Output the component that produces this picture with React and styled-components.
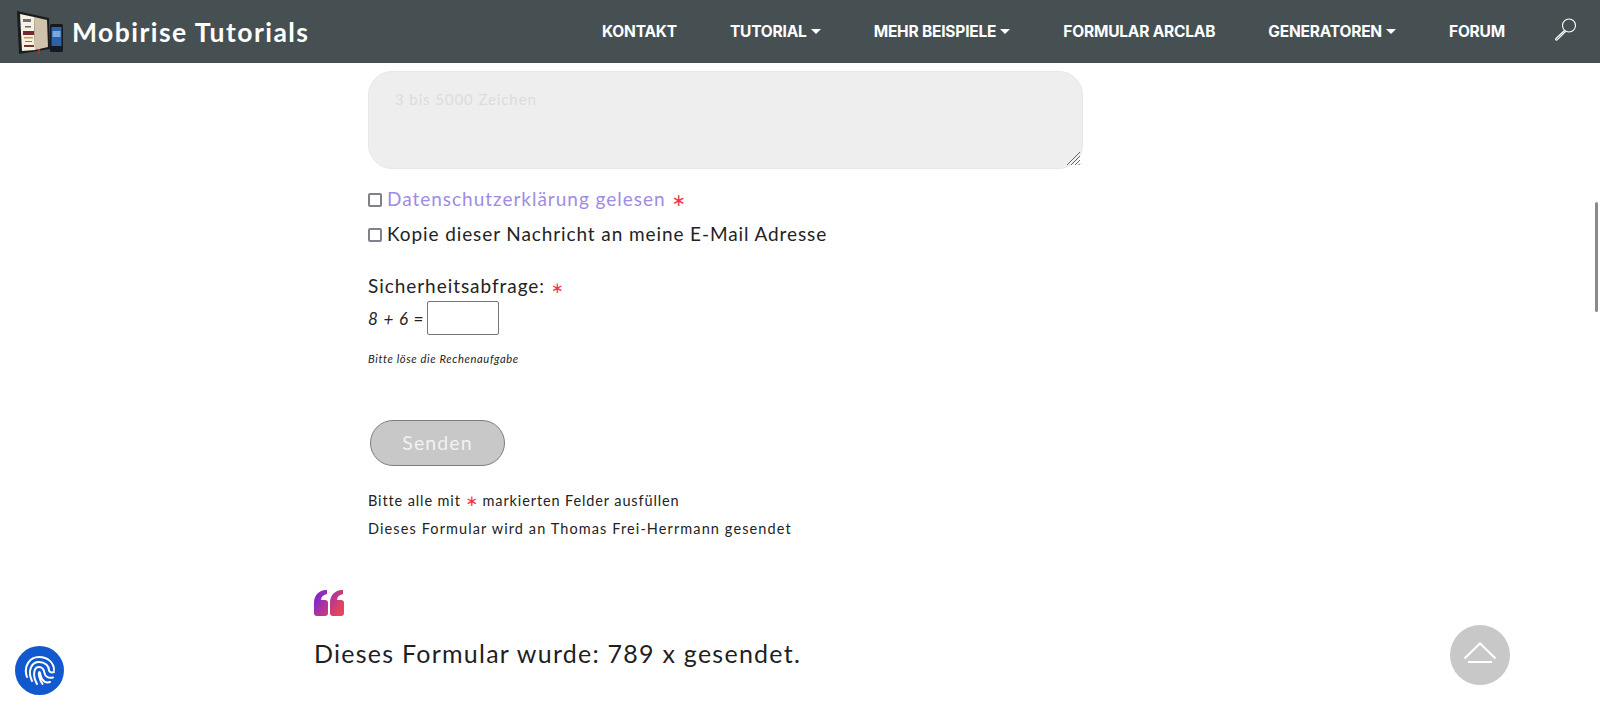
import React from "react";
import styled, { createGlobalStyle } from "styled-components";

const Global = createGlobalStyle`
  html, body { margin: 0; padding: 0; height: 708px; overflow: hidden; background: #fff; }
  * { box-sizing: border-box; }
  body { font-family: "Lato", "Noto Sans", sans-serif; color: #232323; }
`;

const Page = styled.div`
  width: 1600px;
  height: 708px;
  overflow: hidden;
  display: flex;
  flex-direction: column;
`;

const Navbar = styled.header`
  height: 63px;
  flex: none;
  background: #465053;
  display: flex;
  align-items: center;
  padding: 0 22px 0 16px;
`;

const Brand = styled.a`
  display: flex;
  align-items: center;
  gap: 8px;
  color: #fff;
  font: 700 26.5px "Lato", sans-serif;
  letter-spacing: 1.45px;
`;

const NavList = styled.nav`
  margin-left: auto;
  display: flex;
  align-items: center;
  gap: 53px;
`;

const NavLink = styled.a`
  display: flex;
  align-items: center;
  gap: 4px;
  color: #fff;
  font: 700 15.5px "Inter", sans-serif;
  letter-spacing: -0.2px;
  white-space: nowrap;
`;

const Caret = styled.span`
  width: 0;
  height: 0;
  border-left: 5px solid transparent;
  border-right: 5px solid transparent;
  border-top: 5px solid #fff;
`;

const SearchIcon = styled.svg`
  width: 24px;
  height: 24px;
  margin: -6px 0 0 -4px;
`;

const Container = styled.main`
  width: 972px;
  margin: 0 auto;
`;

const Form = styled.form`
  padding: 8px 0 0 54px;
  width: 769px;
`;

const FakeTextarea = styled.div`
  height: 98px;
  border: 1px solid #e8e8e8;
  border-radius: 24px;
  background: #eeeeee;
  padding: 18px 26px;
  color: #dcdcdc;
  font: 400 15px "Lato", sans-serif;
  letter-spacing: 0.9px;
  position: relative;
`;

const Grip = styled.svg`
  position: absolute;
  right: 1px;
  bottom: 2px;
  width: 15px;
  height: 15px;
`;

const CheckList = styled.div`
  margin-top: 12px;
`;

const CheckRow = styled.label`
  display: flex;
  align-items: center;
  gap: 5px;
  height: 35px;
  font-size: 19px;
  letter-spacing: ${(p) => p.$spacing ?? 0.9}px;
  color: ${(p) => p.$color || "#232323"};
`;

const CheckBox = styled.span`
  width: 14px;
  height: 14px;
  margin-top: 3px;
  border: 2px solid #80808a;
  border-radius: 2px;
  background: #fff;
  flex: none;
`;

const Star = styled.span`
  color: #ee3448;
  font-family: "DejaVu Sans", sans-serif;
  margin-left: ${(p) => p.$gap ?? 6}px;
  font-size: ${(p) => p.$size ?? 17}px;
  letter-spacing: 0;
`;

const CaptchaLabel = styled.div`
  margin-top: 22px;
  font-size: 19px;
  line-height: 26px;
  letter-spacing: 0.95px;
`;

const CaptchaRow = styled.div`
  display: flex;
  align-items: center;
  gap: 3px;
  font-size: 17px;
  font-style: italic;
  letter-spacing: 0.8px;
`;

const CaptchaInput = styled.span`
  width: 72px;
  height: 34px;
  border: 1px solid #767676;
  border-radius: 2px;
  background: #fff;
`;

const Hint = styled.div`
  margin-top: 17px;
  font-size: 11.2px;
  font-style: italic;
  letter-spacing: 0.62px;
`;

const SendButton = styled.button`
  display: flex;
  align-items: center;
  justify-content: center;
  margin: 55px 0 0 2px;
  padding: 0 0 2px;
  width: 135px;
  height: 46px;
  border: 1px solid #7d7d7d;
  border-radius: 23px;
  background: #c8c8c8;
  color: #f2f2f2;
  font: 400 19.5px "Lato", sans-serif;
  letter-spacing: 1.1px;
`;

const Note = styled.p`
  margin: ${(p) => p.$top || 0}px 0 0;
  font-size: 14.5px;
  line-height: 28px;
  letter-spacing: ${(p) => p.$spacing ?? 1.1}px;
`;

const Quote = styled.section`
  margin-top: 47px;
`;

const QuoteIcon = styled.svg`
  display: block;
  width: 30px;
  height: 26px;
`;

const QuoteText = styled.p`
  margin: 22px 0 0;
  font-size: 25px;
  letter-spacing: 1.25px;
  color: #1f1f1f;
`;

const ChatBadge = styled.div`
  position: fixed;
  left: 15px;
  top: 646px;
  width: 49px;
  height: 49px;
  border-radius: 50%;
  background: #1259cf;
  display: flex;
  align-items: center;
  justify-content: center;
`;

const ScrollTop = styled.div`
  position: fixed;
  left: 1450px;
  top: 625px;
  width: 60px;
  height: 60px;
  border-radius: 50%;
  background: #c8c8c8;
  display: flex;
  align-items: center;
  justify-content: center;
`;

const ScrollThumb = styled.div`
  position: fixed;
  left: 1595px;
  top: 202px;
  width: 3px;
  height: 110px;
  background: #8a8a8a;
  border-radius: 2px;
`;

const Logo = () => (
  <svg width="48" height="46" viewBox="0 0 48 46">
    <path d="M1 2 L33 9 L34 40 L3 45 Z" fill="#1c1c1c" />
    <path d="M4 5 L18 8 L19 41 L6 42 Z" fill="#f6f1e2" />
    <path d="M18 8 L31 11 L32 38 L19 41 Z" fill="#cfc3ab" />
    <rect x="7" y="10" width="8" height="3" fill="#6a7282" />
    <rect x="9" y="17" width="6" height="1.500" fill="#666" />
    <rect x="7" y="22" width="11" height="4" fill="#7a2630" />
    <rect x="8" y="28" width="9" height="1.500" fill="#c9a13a" />
    <rect x="9" y="32" width="7" height="1" fill="#777" />
    <rect x="8" y="36" width="10" height="2" fill="#6a3a2a" />
    <rect x="22" y="40" width="2" height="5" fill="#b52a3a" />
    <rect x="34" y="15" width="13" height="28" rx="1.500" fill="#151a22" />
    <rect x="35.500" y="18" width="10" height="19" fill="#2a62a8" />
    <rect x="36.500" y="22" width="8" height="6" fill="#7aa8d8" />
  </svg>
);

const Fingerprint = () => (
  <svg width="32" height="32" viewBox="0 0 32 32" fill="none" stroke="#fff" strokeWidth="2" strokeLinecap="round">
    <path d="M3 22 C-1 11 6 2 15 2 C24 2 30 8 30 15" />
    <path d="M8 26 C3 15 8 7 15 7 C21 7 25 11 25 15 C25 17 27 18 30 17" />
    <path d="M13 29 C8 20 10 12 15 12 C19 12 20 15 20.500 18 C21 22 25 23.500 29 22.500" />
    <path d="M18.500 29 C15 24 14 17 15.500 17 C16.500 17 16 21 18 24 C20 27 23 28 26 27" />
  </svg>
);

export default function App() {
  return (
    <Page>
      <Global />
      <Navbar>
        <Brand>
          <Logo />
          Mobirise Tutorials
        </Brand>
        <NavList>
          <NavLink>KONTAKT</NavLink>
          <NavLink>TUTORIAL<Caret /></NavLink>
          <NavLink>MEHR BEISPIELE<Caret /></NavLink>
          <NavLink>FORMULAR ARCLAB</NavLink>
          <NavLink>GENERATOREN<Caret /></NavLink>
          <NavLink>FORUM</NavLink>
          <SearchIcon viewBox="0 0 24 24" fill="none" stroke="#fff" strokeWidth="1.100">
            <circle cx="15" cy="8.500" r="6.500" />
            <path d="M10.500 13.500 L2.500 21 Q1 22.500 2 23 Q3 23.500 4 22 L11.500 14.500" />
          </SearchIcon>
        </NavList>
      </Navbar>
      <Container>
        <Form>
          <FakeTextarea>
            3 bis 5000 Zeichen
            <Grip viewBox="0 0 15 15" stroke="#666" strokeWidth="1">
              <path d="M1 14 L14 1 M5 14 L14 5 M9 14 L14 9 M12.500 14 L14 12.500" />
            </Grip>
          </FakeTextarea>
          <CheckList>
            <CheckRow $color="#9f8be6" $spacing={0.98}>
              <CheckBox />
              <span>Datenschutzerklärung gelesen<Star>∗</Star></span>
            </CheckRow>
            <CheckRow>
              <CheckBox />
              Kopie dieser Nachricht an meine E-Mail Adresse
            </CheckRow>
          </CheckList>
          <CaptchaLabel>Sicherheitsabfrage:<Star $size={15}>∗</Star></CaptchaLabel>
          <CaptchaRow>8 + 6 =<CaptchaInput /></CaptchaRow>
          <Hint>Bitte löse die Rechenaufgabe</Hint>
          <SendButton type="button">Senden</SendButton>
          <Note $top={21} $spacing={0.88}>Bitte alle mit <Star $gap={0} $size={15}>∗</Star> markierten Felder ausfüllen</Note>
          <Note>Dieses Formular wird an Thomas Frei-Herrmann gesendet</Note>
        </Form>
        <Quote>
          <QuoteIcon viewBox="0 0 30 26">
            <defs>
              <linearGradient id="qg" x1="0" y1="0" x2="1" y2="0.600">
                <stop offset="0" stopColor="#6f22e0" />
                <stop offset="1" stopColor="#e6465a" />
              </linearGradient>
            </defs>
            <path
              fill="url(#qg)"
              d="M0 13 C0 6 4 1 11 0 L13 0 L13 4 C9 5 7 7 7 10 L11 10 Q14 10 14 13 L14 23 Q14 26 11 26 L3 26 Q0 26 0 23 Z M16 13 C16 6 20 1 27 0 L29 0 L29 4 C25 5 23 7 23 10 L27 10 Q30 10 30 13 L30 23 Q30 26 27 26 L19 26 Q16 26 16 23 Z"
            />
          </QuoteIcon>
          <QuoteText>Dieses Formular wurde: 789 x gesendet.</QuoteText>
        </Quote>
      </Container>
      <ChatBadge><Fingerprint /></ChatBadge>
      <ScrollTop>
        <svg width="36" height="26" viewBox="0 0 36 26" fill="none" stroke="#fff" strokeWidth="2">
          <path d="M2.500 16.500 L18 1.500 L33.500 16.500" />
          <path d="M6 20 H30" />
        </svg>
      </ScrollTop>
      <ScrollThumb />
    </Page>
  );
}
